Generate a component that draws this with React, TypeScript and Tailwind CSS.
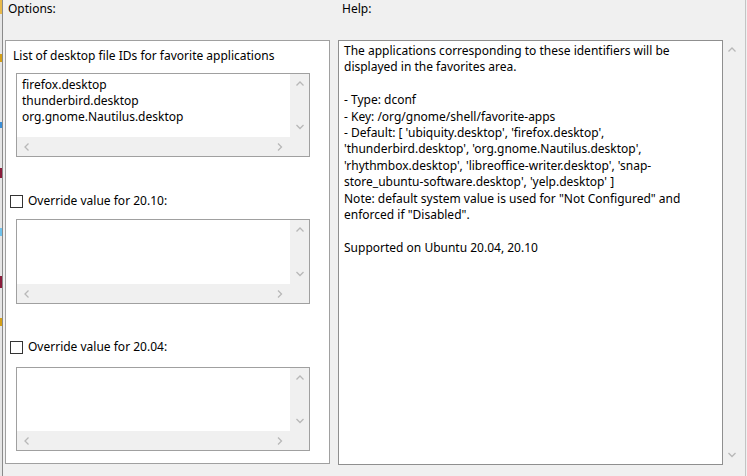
import React from "react";

const FONT = { fontFamily: '"Noto Sans", "Open Sans", sans-serif' };

function Chevron({ dir }: { dir: "up" | "down" | "left" | "right" }) {
  const pts =
    dir === "up"
      ? "0.5,4.5 4,1 7.5,4.5"
      : dir === "down"
        ? "0.5,1 4,4.5 7.5,1"
        : dir === "left"
          ? "4.5,0.5 1,4 4.5,7.5"
          : "1,0.5 4.5,4 1,7.5";
  const horiz = dir === "up" || dir === "down";
  return (
    <svg width={horiz ? 8 : 6} height={horiz ? 6 : 8} viewBox={horiz ? "0 0 8 6" : "0 0 6 8"}>
      <polyline points={pts} fill="none" stroke="#b8b8b8" strokeWidth="1.3" />
    </svg>
  );
}

function TextBox({ lines, h, hbar }: { lines?: string[]; h: string; hbar: string }) {
  return (
    <div className={`ml-[10px] w-[294px] ${h} border border-[#a0a0a0] bg-white flex flex-col`}>
      <div className="flex flex-1 min-h-0">
        <div className="flex-1 pl-[5px] pt-[3px] text-[12px] leading-4 text-black whitespace-nowrap">
          {lines?.map((l) => <div key={l}>{l}</div>)}
        </div>
        <div className="w-[19px] bg-[#f0f0f0] flex flex-col items-center justify-between py-[7px]">
          <Chevron dir="up" />
          <Chevron dir="down" />
        </div>
      </div>
      <div className={`${hbar} bg-[#f0f0f0] flex items-center justify-between pl-[7px] pr-[26px]`}>
        <Chevron dir="left" />
        <Chevron dir="right" />
      </div>
    </div>
  );
}

function Check({ label }: { label: string }) {
  return (
    <div className="flex items-center h-4 pl-[4px] text-[12px] leading-4">
      <div className="w-[13px] h-[13px] border border-[#333333] bg-white shrink-0" />
      <span className="ml-[5px]">{label}</span>
    </div>
  );
}

const help = [
  "The applications corresponding to these identifiers will be",
  "displayed in the favorites area.",
  "",
  "- Type: dconf",
  "- Key: /org/gnome/shell/favorite-apps",
  "- Default: [ 'ubiquity.desktop', 'firefox.desktop',",
  "'thunderbird.desktop', 'org.gnome.Nautilus.desktop',",
  "'rhythmbox.desktop', 'libreoffice-writer.desktop', 'snap-",
  "store_ubuntu-software.desktop', 'yelp.desktop' ]",
  "Note: default system value is used for \"Not Configured\" and",
  "enforced if \"Disabled\".",
  "",
  "Supported on Ubuntu 20.04, 20.10",
];

export default function App() {
  return (
    <div className="w-[747px] h-[476px] bg-[#f0f0f0] flex text-black overflow-hidden" style={FONT}>
      {/* edge of the window behind */}
      <div className="w-[2px] flex flex-col bg-[#e6e6e6]">
        <div className="h-[14px] bg-[#e8b94a]" />
        <div className="h-[40px]" />
        <div className="h-[8px] bg-[#d4a017]" />
        <div className="h-[60px]" />
        <div className="h-[6px] bg-[#3a8fd8]" />
        <div className="h-[40px]" />
        <div className="h-[10px] bg-[#8a1d3c]" />
        <div className="h-[50px]" />
        <div className="h-[8px] bg-[#6fc2ec]" />
        <div className="h-[40px]" />
        <div className="h-[12px] bg-[#8a1d3c]" />
        <div className="h-[30px]" />
        <div className="h-[8px] bg-[#d4a017]" />
      </div>
      <div className="w-[1px] bg-[#8a8a8a]" />
      <div className="w-[2px]" />

      {/* Options */}
      <div className="w-[325px] flex flex-col">
        <div className="h-[40px] pl-[3px] pt-[1px] text-[12px] leading-4">Options:</div>
        <div className="h-[424px] border border-[#a0a0a0] bg-white flex flex-col">
          <div className="mt-[7px] pl-[7px] text-[12px] leading-4">
            List of desktop file IDs for favorite applications
          </div>
          <div className="mt-[9px]">
            <TextBox
              lines={["firefox.desktop", "thunderbird.desktop", "org.gnome.Nautilus.desktop"]}
              h="h-[84px]"
              hbar="h-[19px]"
            />
          </div>
          <div className="mt-[36px]">
            <Check label="Override value for 20.10:" />
          </div>
          <div className="mt-[10px]">
            <TextBox h="h-[85px]" hbar="h-[19px]" />
          </div>
          <div className="mt-[35px]">
            <Check label="Override value for 20.04:" />
          </div>
          <div className="mt-[12px]">
            <TextBox h="h-[84px]" hbar="h-[19px]" />
          </div>
        </div>
      </div>

      <div className="w-[8px]" />

      {/* Help */}
      <div className="flex flex-col">
        <div className="h-[40px] pl-[4px] pt-[1px] text-[12px] leading-4">Help:</div>
        <div className="flex">
          <div className="w-[385px] h-[425px] border border-[#8f8f8f] bg-white pl-[5px] pt-[2px] text-[12px] leading-[16.4px] whitespace-nowrap">
            {help.map((l, i) => (
              <div key={i} className="h-[16.4px]">
                {l}
              </div>
            ))}
          </div>
          <div className="w-[18px] h-[425px] flex flex-col items-center justify-between pt-[7px] pb-[7px]">
            <Chevron dir="up" />
            <Chevron dir="down" />
          </div>
        </div>
      </div>
      <div className="w-[4px]" />
      <div className="w-[1px] bg-[#c4c4c4]" />
      <div className="w-[1px]" />
    </div>
  );
}
